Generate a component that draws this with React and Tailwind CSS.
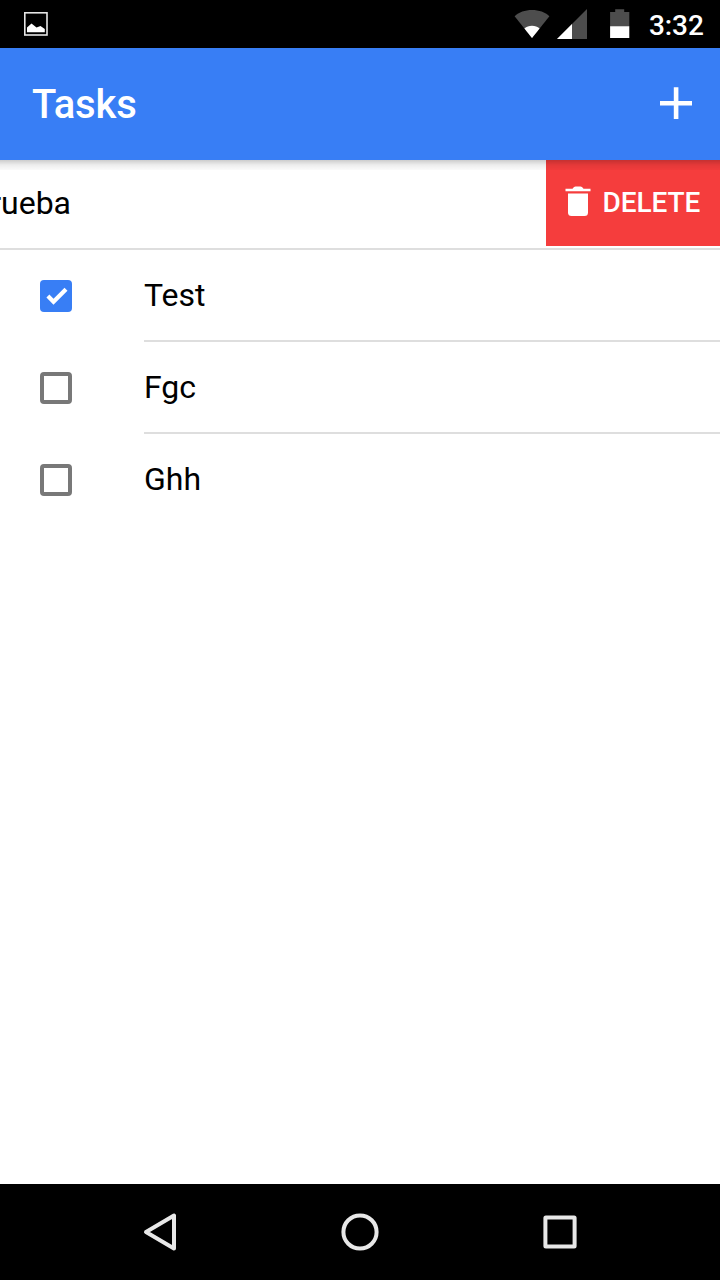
import React from "react";

const TASKS = [
  { title: "Test", done: true },
  { title: "Fgc", done: false },
  { title: "Ghh", done: false },
];

function StatusBar() {
  return (
    <div className="flex h-12 shrink-0 items-center bg-black pl-6 pr-4 text-white">
      <svg width="24" height="24" viewBox="0 0 24 24">
        <rect x="0.8" y="0.8" width="22.2" height="22.2" fill="none" stroke="#e6e6e6" strokeWidth="1.6" />
        <path d="M3 20.3V15.5L7.5 11.5L12.5 15.4L16.5 14L20.8 17V20.3Z" fill="#fff" />
      </svg>
      <svg className="ml-auto" width="36" height="30" viewBox="0 0 36 30">
        <path d="M18 29L0.6 7.2C5 3.2 11 1 18 1S31 3.2 35.4 7.2Z" fill="#4d4d4d" />
        <path d="M18 29L10.4 19.5C12.5 17.7 15 16.8 18 16.8S23.5 17.7 25.6 19.5Z" fill="#fff" />
      </svg>
      <svg className="ml-[7px]" width="30" height="30" viewBox="0 0 30 30">
        <path d="M0 30L30 0V30Z" fill="#4d4d4d" />
        <path d="M0 30L15 15V30Z" fill="#fff" />
      </svg>
      <svg className="ml-[23px]" width="20" height="30" viewBox="0 0 20 30">
        <path d="M5.2 0.2H14.2V3H19.3V17.2H0.1V3H5.2Z" fill="#4d4d4d" />
        <path d="M0.1 17.2H19.3V29H0.1Z" fill="#fff" />
      </svg>
      <span className="ml-[19px] mt-[3px] w-[55px] whitespace-nowrap text-[28px] font-medium leading-8 tracking-[-0.1px]">3:32</span>
    </div>
  );
}

function Header() {
  return (
    <header className="relative z-10 flex h-28 shrink-0 items-center justify-between bg-[#387ef5] pl-8 pr-7 text-white">
      <h1 className="pt-0.5 text-[40px] font-medium leading-[48px] tracking-[-0.12px]">Tasks</h1>
      <button type="button" aria-label="Add task" className="-mt-0.5">
        <svg className="block" width="32" height="32" viewBox="0 0 32 32">
          <path d="M13.8 0.3H18.4V14H32V18.6H18.4V32H13.8V18.6H0V14H13.8Z" fill="#fff" />
        </svg>
      </button>
      <div className="absolute inset-x-0 top-full h-2.5 bg-linear-to-b from-black/20 via-black/7 to-black/2" />
    </header>
  );
}

function Checkbox({ checked }) {
  if (checked) {
    return (
      <span className="flex size-8 items-center justify-center rounded-[4px] bg-[#387ef5]">
        <svg width="32" height="32" viewBox="0 0 32 32">
          <path d="M7.9 16.1L13.5 21.7L26 9.2" fill="none" stroke="#fff" strokeWidth="4.2" />
        </svg>
      </span>
    );
  }
  return <span className="block size-8 rounded-[4px] border-4 border-[#787878]" />;
}

function SwipedTask() {
  return (
    <li className="flex h-[90px] justify-end overflow-hidden border-b-2 border-[#dedede]">
      <span className="-ml-[30px] flex-1 pt-[23px] text-[32px] leading-10">Prueba</span>
      <button type="button" className="flex h-[86px] w-[174px] items-center bg-[#f53d3d] pl-[19px] text-white">
        <svg width="26" height="30" viewBox="0 0 26 30" className="-mt-[4px]">
          <path d="M0.5 2.7H7.5Q9 0.5 10.5 0.5H15.5Q17 0.5 18.5 2.7H25.5V5.2H0.5Z" fill="#fff" />
          <path d="M3 7.5H23V26.5Q23 30 19.5 30H6.5Q3 30 3 26.5Z" fill="#fff" />
        </svg>
        <span className="ml-[11.5px] text-[28px] font-medium leading-8 tracking-[-0.08px]">DELETE</span>
      </button>
    </li>
  );
}

function Task({ title, done }) {
  return (
    <li className="flex h-[92px]">
      <div className="flex w-36 items-center pl-10">
        <Checkbox checked={done} />
      </div>
      <div className="flex flex-1 items-center border-b-2 border-[#dedede] text-[32px] leading-10 [li:last-child>&]:border-transparent">
        {title}
      </div>
    </li>
  );
}

function NavBar() {
  return (
    <nav className="flex h-24 shrink-0 items-center justify-center gap-40 bg-black">
      <svg width="40" height="40" viewBox="0 0 40 40" fill="none" stroke="#e8e8e8" strokeWidth="4" strokeLinejoin="round">
        <path d="M6 20L34 3.6V36.4Z" />
      </svg>
      <svg width="40" height="40" viewBox="0 0 40 40" fill="none" stroke="#e8e8e8" strokeWidth="4">
        <circle cx="20" cy="20" r="16.6" />
      </svg>
      <svg width="40" height="40" viewBox="0 0 40 40" fill="none" stroke="#e8e8e8" strokeWidth="4" strokeLinejoin="round">
        <rect x="5.4" y="5.4" width="29.2" height="29.2" rx="0.5" />
      </svg>
    </nav>
  );
}

export default function App() {
  return (
    <div className="flex h-[1280px] w-[720px] flex-col overflow-hidden bg-white font-['Roboto',sans-serif] text-black">
      <StatusBar />
      <Header />
      <ul className="flex-1">
        <SwipedTask />
        {TASKS.map((task) => (
          <Task key={task.title} title={task.title} done={task.done} />
        ))}
      </ul>
      <NavBar />
    </div>
  );
}
